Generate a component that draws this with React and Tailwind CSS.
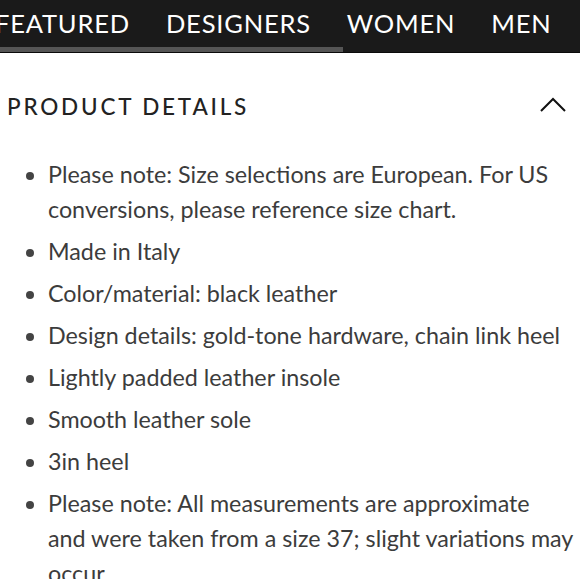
const NAV = ['FEATURED', 'DESIGNERS', 'WOMEN', 'MEN', 'KIDS']

const DETAILS = [
  'Please note: Size selections are European. For US conversions, please reference size chart.',
  'Made in Italy',
  'Color/material: black leather',
  'Design details: gold-tone hardware, chain link heel',
  'Lightly padded leather insole',
  'Smooth leather sole',
  '3in heel',
]

export default function App() {
  return (
    <div className="w-[580px] h-[579px] overflow-hidden bg-white font-['Lato',sans-serif]">
      {/* Top nav */}
      <div className="relative h-[53px] bg-[#1a1a1a] border-b border-[#0a0a0a] overflow-hidden">
        <div className="flex gap-[36px] whitespace-nowrap ml-[-5px] pt-[7px] text-[25.5px] leading-[32px] tracking-[0.8px] text-white">
          {NAV.map((n) => (
            <span key={n}>{n}</span>
          ))}
        </div>
        <div className="absolute left-0 bottom-0 h-[5px] w-[343px] bg-[#555]" />
      </div>

      {/* Product details */}
      <div className="pl-[7px] pr-[14px] pt-[38px] flex items-center justify-between">
        <h2 className="text-[22.5px] leading-[32px] tracking-[2.8px] font-medium text-[#222]">PRODUCT DETAILS</h2>
        <svg width="26" height="16" viewBox="0 0 26 16" fill="none" stroke="#111" strokeWidth="2" className="-mt-[4px]">
          <polyline points="1,14 13,2 25,14" />
        </svg>
      </div>

      <ul className="mt-[34px] pl-[48px] w-[580px] space-y-[7px] text-[23.3px] leading-[35px] text-[#3c3c3c] list-disc marker:text-[#444]">
        {DETAILS.map((d, i) => (
          <li key={i}>{d}</li>
        ))}
        <li>
          Please note: All measurements are approximate
          <br />
          and were taken from a size 37; slight variations may occur.
        </li>
      </ul>
      <div className="border-b border-[#e5e5e5]" />
    </div>
  )
}
